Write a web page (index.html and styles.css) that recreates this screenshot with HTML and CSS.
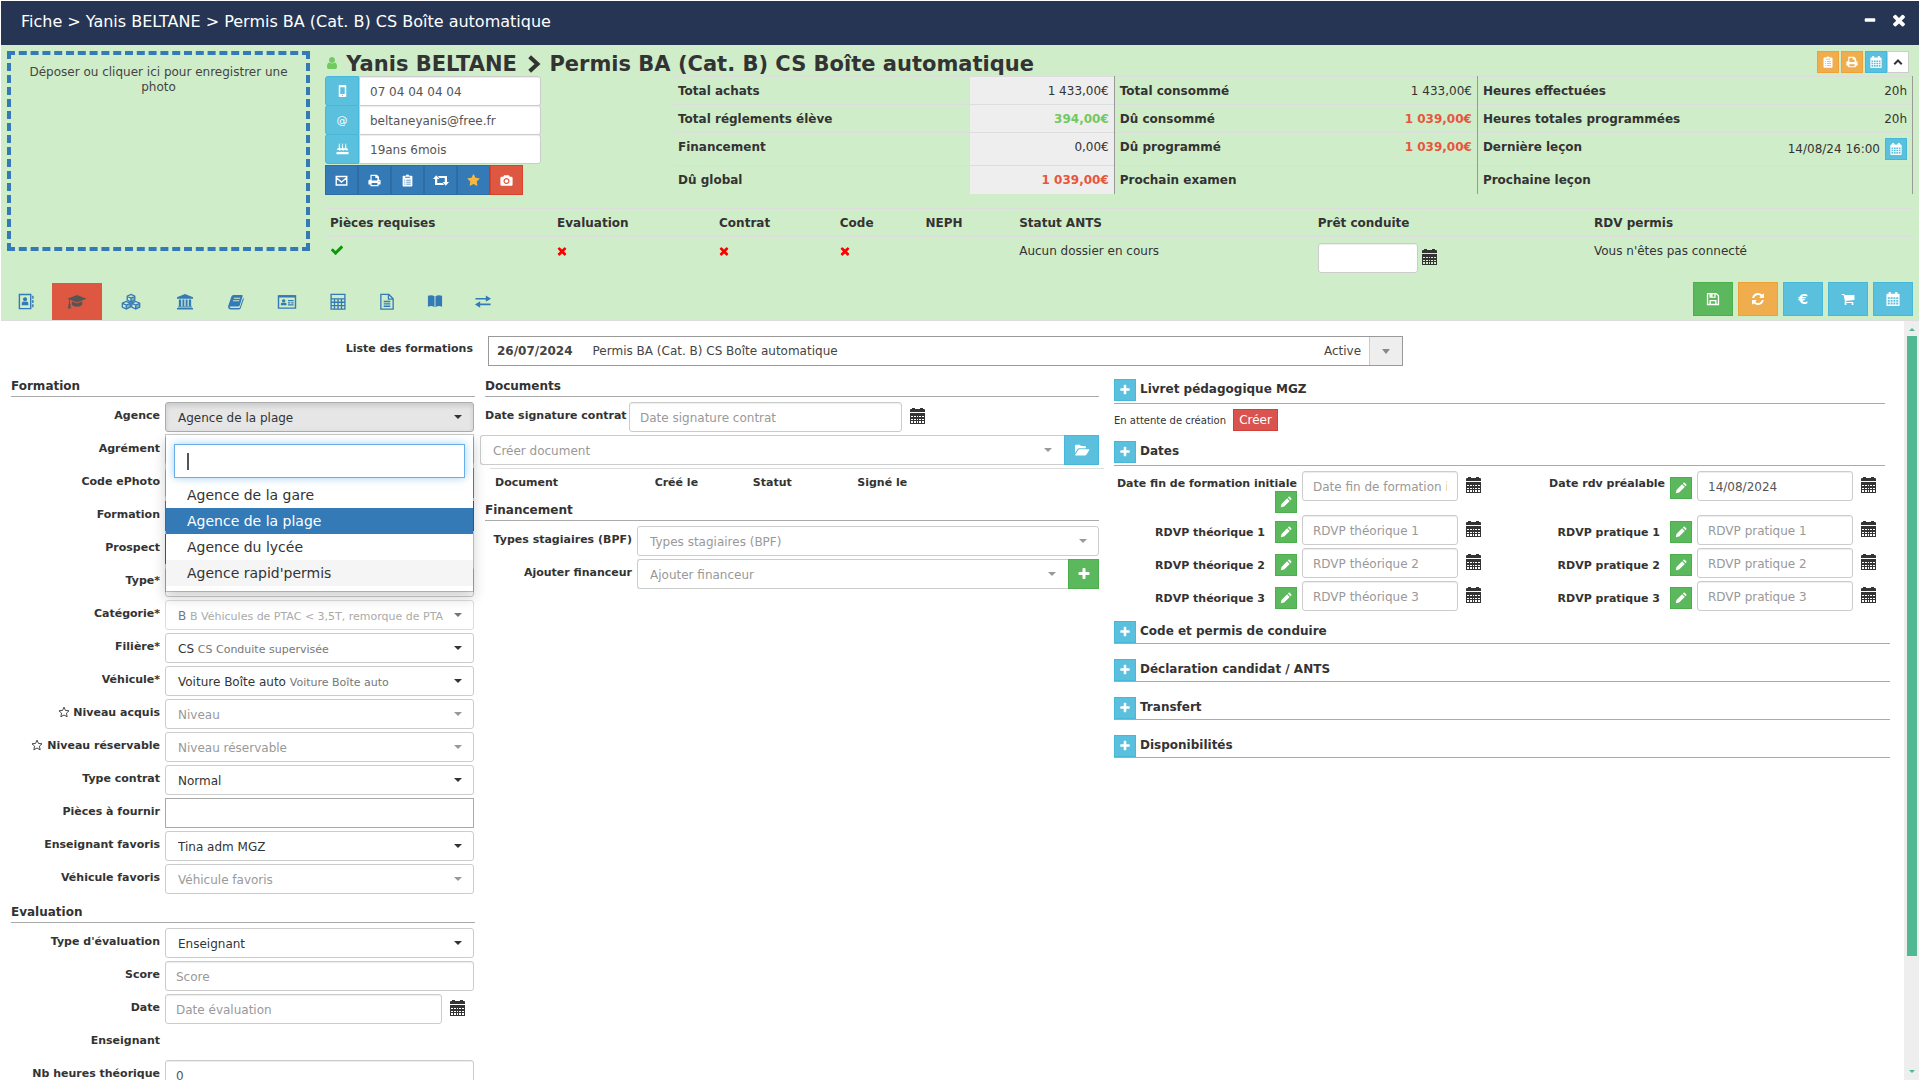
FILE: index.html
```html
<!DOCTYPE html>
<html lang="fr">
<head>
    <meta charset="UTF-8">
    <meta name="viewport" content="width=device-width, initial-scale=1.0">
    <title>Fiche élève</title>
    <link rel="stylesheet" href="styles.css">
</head>
<body>
    <!-- Icons -->
    <svg class="sprite" aria-hidden="true">
        <symbol id="i-user" viewBox="0 0 1792 1792"><path d="M1536 1399q0 109-62.500 187t-150.500 78h-854q-88 0-150.500-78t-62.500-187q0-85 8.500-160.500t31.500-152 58.500-131 94-89 134.500-34.500q131 128 313 128t313-128q76 0 134.500 34.500t94 89 58.500 131 31.500 152 8.500 160.500zm-256-887q0 159-112.500 271.500t-271.500 112.500-271.500-112.500-112.500-271.500 112.500-271.500 271.500-112.500 271.500 112.500 112.500 271.500z"/></symbol>
        <symbol id="i-plus" viewBox="0 0 1792 1792"><path d="M1600 736v192q0 40-28 68t-68 28h-416v416q0 40-28 68t-68 28h-192q-40 0-68-28t-28-68v-416h-416q-40 0-68-28t-28-68v-192q0-40 28-68t68-28h416v-416q0-40 28-68t68-28h192q40 0 68 28t28 68v416h416q40 0 68 28t28 68z"/></symbol>
        <symbol id="i-check" viewBox="0 0 1792 1792"><path d="M1671 566q0 40-28 68l-724 724-136 136q-28 28-68 28t-68-28l-136-136-362-362q-28-28-28-68t28-68l136-136q28-28 68-28t68 28l294 295 656-657q28-28 68-28t68 28l136 136q28 28 28 68z"/></symbol>
        <symbol id="i-times" viewBox="200 200 1392 1392"><path d="M1490 1322q0 40-28 68l-136 136q-28 28-68 28t-68-28l-294-294-294 294q-28 28-68 28t-68-28l-136-136q-28-28-28-68t28-68l294-294-294-294q-28-28-28-68t28-68l136-136q28-28 68-28t68 28l294 294 294-294q28-28 68-28t68 28l136 136q28 28 28 68t-28 68l-294 294 294 294q28 28 28 68z"/></symbol>
        <symbol id="i-star" viewBox="0 0 1792 1792"><path d="M1728 647q0 22-26 48l-363 354 86 500q1 7 1 20 0 21-10.500 35.500t-30.500 14.500q-19 0-40-12l-449-236-449 236q-22 12-40 12-21 0-31.500-14.500t-10.500-35.500q0-6 2-20l86-500-364-354q-25-27-25-48 0-37 56-46l502-73 225-455q19-41 49-41t49 41l225 455 502 73q56 9 56 46z"/></symbol>
        <symbol id="i-refresh" viewBox="0 0 1792 1792"><path d="M1639 1056q0 5-1 7-64 268-268 434.500t-478 166.500q-146 0-282.500-55t-243.500-157l-129 129q-19 19-45 19t-45-19-19-45v-448q0-26 19-45t45-19h448q26 0 45 19t19 45-19 45l-137 137q71 66 161 102t187 36q134 0 250-65t186-179q11-17 53-117 8-23 30-23h192q13 0 22.500 9.500t9.500 22.500zm25-800v448q0 26-19 45t-45 19h-448q-26 0-45-19t-19-45 19-45l138-138q-148-137-349-137-134 0-250 65t-186 179q-11 17-53 117-8 23-30 23h-199q-13 0-22.500-9.500t-9.500-22.500v-7q65-268 270-434.500t480-166.500q146 0 284 55.500t245 156.500l130-129q19-19 45-19t45 19 19 45z"/></symbol>
        <symbol id="i-cart" viewBox="0 0 1792 1792"><path d="M704 1536q0 52-38 90t-90 38-90-38-38-90 38-90 90-38 90 38 38 90zm896 0q0 52-38 90t-90 38-90-38-38-90 38-90 90-38 90 38 38 90zm128-1088v512q0 24-16.500 42.500t-40.500 21.500l-1044 122q13 60 13 70 0 16-24 64h920q26 0 45 19t19 45-19 45-45 19h-1024q-26 0-45-19t-19-45q0-11 8-31.500t16-36 21.500-40 15.500-29.500l-177-823h-204q-26 0-45-19t-19-45 19-45 45-19h256q16 0 28.500 6.500t19.500 15.500 13 24.500 8 26 5.500 29.500 4.500 26h1201q26 0 45 19t19 45z"/></symbol>
        <symbol id="i-star-o" viewBox="0 0 16 16"><path d="M8 1.500l2 4.400 4.700.5-3.500 3.200 1 4.800L8 12l-4.200 2.400 1-4.800L1.300 6.400 6 5.900z" fill="none" stroke="currentColor" stroke-width="1.200"/></symbol>
        <symbol id="i-chevron" viewBox="0 0 16 16"><path d="M5 1.500L12 8l-7 6.500" fill="none" stroke="currentColor" stroke-width="3.600"/></symbol>
        <symbol id="i-up" viewBox="0 0 16 16"><path d="M3 11l5-5 5 5" fill="none" stroke="currentColor" stroke-width="2.600"/></symbol>
        <symbol id="i-minus" viewBox="0 0 16 16"><rect x="2" y="6" width="12" height="4" rx="1"/></symbol>
        <symbol id="i-mobile" viewBox="0 0 16 16"><path fill-rule="evenodd" d="M4 0h8q1 0 1 1v14q0 1-1 1H4q-1 0-1-1V1q0-1 1-1zm1 3v9h6V3zM7.300 13.300v1.200h1.400v-1.200z"/></symbol>
        <symbol id="i-cake" viewBox="0 0 16 16"><path d="M3 3h1.500v4H3zM7.200 3h1.600v4H7.200zM11.500 3H13v4h-1.500zM3 1h1.500v1.300H3zM7.200 1h1.600v1.300H7.200zM11.500 1H13v1.300h-1.500zM2 7h12q1 0 1 1v1.500q-1.200 1-2.300 0t-2.300 0-2.400 0-2.300 0-2.300 0T1 9.500V8q0-1 1-1zM0 15v-3.500q2 1 3.500 0 1.500 1 2.800 0 1.700 1 3.200 0 1.500 1 3 0 1.500 1 3.500 0V15z"/></symbol>
        <symbol id="i-mail" viewBox="0 0 16 16"><path d="M1.500 3h13v10.500h-13zM2 5l6 5 6-5" fill="none" stroke="currentColor" stroke-width="1.700"/></symbol>
        <symbol id="i-print" viewBox="0 0 16 16"><path fill-rule="evenodd" d="M3 1h8l2.500 2.500V7H14q1.500 0 1.500 1.500V13h-2.500v2H3v-2H.5V8.500Q.5 7 2 7h1zm1.500 1.500V8h7V5H9V2.500zm0 8.500v2.500h7V11zM13 8.500v1h1v-1z"/></symbol>
        <symbol id="i-clip" viewBox="0 0 16 16"><path fill-rule="evenodd" d="M3 2h3q0-1.500 2-1.500T10 2h3q1 0 1 1v11.500q0 1-1 1H3q-1 0-1-1V3q0-1 1-1zm2 1.500V4.500h6V3.500zM4 7v1h1.200V7zm2.500 0v1H12V7zM4 9.500v1h1.200v-1zm2.500 0v1H12v-1zM4 12v1h1.200v-1zm2.500 0v1H12v-1z"/></symbol>
        <symbol id="i-retweet" viewBox="0 0 20 16"><path d="M4 1.500l4 4.500H5.300v5H12l2 2.500H3q-.5 0-.5-.5V6H0zM16 14.500l-4-4.500h2.700V5H8L6 2.500h11q.5 0 .5.500v7H20z"/></symbol>
        <symbol id="i-camera" viewBox="0 0 16 16"><path fill-rule="evenodd" d="M5 1.500h6l1 2h2q1.500 0 1.500 1.500v8q0 1.500-1.500 1.500H2Q.5 14.500.5 13V5Q.5 3.500 2 3.500h2zM8 5a3.700 3.700 0 1 0 .01 0zm0 1.500a2.200 2.200 0 1 1-.01 0z"/></symbol>
        <symbol id="i-cal" viewBox="0 0 16 16"><path fill-rule="evenodd" d="M3 0h2.500v2h5V0H13v2h1.500q1 0 1 1v12q0 1-1 1h-13q-1 0-1-1V3q0-1 1-1H3zM2 6v2h2.300V6zm3.300 0v2h2.200V6zm3.200 0v2h2.200V6zm3.200 0v2H14V6zM2 9v2h2.300V9zm3.300 0v2h2.200V9zm3.200 0v2h2.200V9zm3.200 0v2H14V9zM2 12v2.300h2.300V12zm3.300 0v2.300h2.200V12zm3.200 0v2.300h2.200V12zm3.200 0v2.300H14V12z"/></symbol>
        <symbol id="i-date" viewBox="0 0 15 16"><path fill-rule="evenodd" d="M1 1h1V0h3v1h5V0h3v1h1q1 0 1 1v2H0V2q0-1 1-1zM0 5h15v11H0zm1 3v1h2V8zm3 0v1h2V8zm3 0v1h1V8zm2 0v1h2V8zm3 0v1h2V8zM1 11v1h2v-1zm3 0v1h2v-1zm3 0v1h1v-1zm2 0v1h2v-1zm3 0v1h2v-1zM1 13v2h2v-2zm3 0v2h2v-2zm3 0v2h1v-2zm2 0v2h2v-2zm3 0v2h2v-2z"/></symbol>
        <symbol id="i-pencil" viewBox="0 0 16 16"><path d="M1 15l1-4.500L9.500 3 13 6.500 5.500 14zM10.500 2l1-1q.7-.6 1.500 0l2 2q.6.800 0 1.500l-1 1z"/></symbol>
        <symbol id="i-save" viewBox="0 0 16 16"><path fill-rule="evenodd" d="M1 1h11l3 3v11H1zm1.500 1.500v11H4V9h8v4.500h1.500v-9l-2-2H11V6.500H4v-4zM7.500 2.500V5.500h2v-3zM5.500 10.500v3h5v-3z"/></symbol>
        <symbol id="i-folder" viewBox="0 0 18 16"><path d="M1 11.500V3.500Q1 2 2.500 2H6q1.500 0 1.500 1.500h4.500Q13.500 3.500 13.500 5v1H6q-1.500 0-2.400 1.300zM1.300 13.300L4.500 8.300Q5.200 7.200 6.500 7.200h10.200q1.100 0 .5 1l-3 4.800q-.7 1.200-2 1.200H2q-1.100 0-.7-.9z"/></symbol>
        <symbol id="i-book-user" viewBox="0 0 18 18"><path d="M2 1.500h12v15H2z" fill="none" stroke="currentColor" stroke-width="1.500"/><path d="M15.500 3H17v3h-1.500zM15.500 7.500H17v3h-1.500zM15.500 12H17v3h-1.500zM8 4.500a2.200 2.200 0 1 1-.01 0zM4.500 13v-2q0-2 1.700-2 1.800 1 3.600 0 1.700 0 1.700 2v2z"/></symbol>
        <symbol id="i-grad" viewBox="0 0 20 18"><path d="M10 2l10 4-10 4L2.500 7v4q1 .5.500 1.500l.5 4h-3l.5-4q-.5-1 .5-1.500V6.500L0 6zM4.500 8.700L10 11l5.500-2.300v3.800q-1.500 2-5.500 2t-5.500-2z"/></symbol>
        <symbol id="i-cubes" viewBox="0 0 20 18"><path d="M10 1.500l4 1.800v4.200l-4 2-4-2V3.300zM6 3.500l4 1.800 4-1.800M10 5.300v4M5 9l4.200 1.800v4L5 17l-4.200-2v-4.200zM1 11l4 1.700L9.200 11M5 12.700V17M15 9l4.200 1.800v4L15 17l-4.200-2v-4.200zM11 11l4 1.700 4.200-1.700M15 12.700V17" fill="none" stroke="currentColor" stroke-width="1.400"/><path d="M10 5.300l4-1.800v4l-4 2zM5 12.700L9.200 11v4L5 17zM15 12.700l4.200-1.700v4L15 17z" opacity=".5"/></symbol>
        <symbol id="i-bank" viewBox="0 0 18 18"><path d="M9 1l8.500 3.500V6h-17V4.500zM2.500 7H5v7H2.500zM6.300 7h2v7h-2zM9.700 7h2v7h-2zM13 7h2.500v7H13zM1.500 14.300h15v1H1.500zM.5 15.800h17V17.500H.5z"/></symbol>
        <symbol id="i-book" viewBox="0 0 18 18"><path fill-rule="evenodd" d="M6.500 2H15q1.500 0 1 1.500l-3 9.500q-.5 1.300-2 1.300H3q-1 0-.7.800T4 16h8q.8 0 1.200-.8l3.300-10q1 .4.600 1.800l-3 9q-.5 1.400-2 1.400H3.500Q1 17.400.600 15q-.1-1 .4-2L4 4q.7-2 2.500-2zM7 5l-.4 1h6.600l.3-1zM6 7.700l-.3 1h6.600l.3-1z"/></symbol>
        <symbol id="i-card" viewBox="0 0 20 18"><path d="M1 3h18v13H1z" fill="none" stroke="currentColor" stroke-width="1.500"/><path d="M1 2.500h18v2.300H1zM6.500 6.500a1.800 1.800 0 1 1-.01 0zM3.500 13v-1.300q0-1.500 1.400-1.500 1.600.7 3.200 0 1.400 0 1.400 1.500V13zM11 7.500h6v1.200h-6zM11 9.700h2.500V11H11zM14.500 9.700H17V11h-2.500zM11 12h6v1.200h-6z"/></symbol>
        <symbol id="i-calc" viewBox="0 0 18 18"><path d="M1.700 1.500h14.600v15.500H1.700zM2 6.200h14M2 9.800h14M2 13.400h14M5.300 6v11M9 6v11M12.700 6v11" fill="none" stroke="currentColor" stroke-width="1.400"/></symbol>
        <symbol id="i-file" viewBox="0 0 18 18"><path d="M2.500 1.500h8.500l4.500 4.500v11h-13zM10.500 1.500v5h5M5.500 9h7M5.500 11.500h7M5.500 14h7" fill="none" stroke="currentColor" stroke-width="1.400"/></symbol>
        <symbol id="i-open-book" viewBox="0 0 18 18"><path d="M1.500 3q4-1.500 7 .500v11.500q-3-2-7-.5zM16.500 3q-4-1.500-7 .500v11.500q3-2 7-.5z"/></symbol>
        <symbol id="i-swap" viewBox="0 0 18 18"><path d="M1 5.200h11V2.700L17.500 6 12 9.300V7H1zM17 11H6V8.800L.5 12.200 6 15.500V13h11z"/></symbol>
    </svg>

    <header class="title-bar">
        <h1>Fiche &gt; Yanis BELTANE &gt; Permis BA (Cat. B) CS Boîte automatique</h1>
        <div class="window-buttons">
            <button type="button" aria-label="Réduire"><svg class="icon"><use href="#i-minus"/></svg></button>
            <button type="button" aria-label="Fermer"><svg class="icon"><use href="#i-times"/></svg></button>
        </div>
    </header>

    <section class="summary">
        <div class="summary-top">
            <button type="button" class="photo-drop">Déposer ou cliquer ici pour enregistrer une photo</button>
            <div class="student">
                <div class="student-head">
                    <h2><svg class="icon user-icon"><use href="#i-user"/></svg> Yanis BELTANE <svg class="icon chevron"><use href="#i-chevron"/></svg> Permis BA (Cat. B) CS Boîte automatique</h2>
                    <div class="head-tools">
                        <button type="button" class="btn btn-xs btn-warning" aria-label="Notes"><svg class="icon"><use href="#i-clip"/></svg></button>
                        <button type="button" class="btn btn-xs btn-warning" aria-label="Imprimer"><svg class="icon"><use href="#i-print"/></svg></button>
                        <div class="btn-pair">
                            <button type="button" class="btn btn-xs btn-info" aria-label="Planning"><svg class="icon"><use href="#i-cal"/></svg></button>
                            <button type="button" class="btn btn-xs btn-default" aria-label="Replier"><svg class="icon"><use href="#i-up"/></svg></button>
                        </div>
                    </div>
                </div>

                <div class="student-row">
                    <div class="contact">
                        <div class="input-group">
                            <label class="addon" for="phone" aria-label="Téléphone"><svg class="icon"><use href="#i-mobile"/></svg></label>
                            <input type="text" id="phone" class="form-control" value="07 04 04 04 04">
                        </div>
                        <div class="input-group">
                            <label class="addon" for="email" aria-label="Email">@</label>
                            <input type="text" id="email" class="form-control" value="beltaneyanis@free.fr">
                        </div>
                        <div class="input-group">
                            <label class="addon" for="age" aria-label="Age"><svg class="icon"><use href="#i-cake"/></svg></label>
                            <input type="text" id="age" class="form-control" value="19ans 6mois">
                        </div>
                        <div class="btn-bar">
                            <button type="button" class="btn btn-primary" aria-label="Email"><svg class="icon"><use href="#i-mail"/></svg></button>
                            <button type="button" class="btn btn-primary" aria-label="Imprimer"><svg class="icon"><use href="#i-print"/></svg></button>
                            <button type="button" class="btn btn-primary" aria-label="Notes"><svg class="icon"><use href="#i-clip"/></svg></button>
                            <button type="button" class="btn btn-primary" aria-label="Transférer"><svg class="icon retweet"><use href="#i-retweet"/></svg></button>
                            <button type="button" class="btn btn-primary btn-star" aria-label="Favori"><svg class="icon"><use href="#i-star"/></svg></button>
                            <button type="button" class="btn btn-photo" aria-label="Photo"><svg class="icon"><use href="#i-camera"/></svg></button>
                        </div>
                    </div>

                    <table class="totals">
                        <tr>
                            <th class="c-label">Total achats</th><td class="c-amount grey">1 433,00€</td>
                            <th class="c-label-2">Total consommé</th><td class="c-amount-2">1 433,00€</td>
                            <th class="c-label-3">Heures effectuées</th><td>20h</td>
                        </tr>
                        <tr>
                            <th>Total réglements élève</th><td class="grey green">394,00€</td>
                            <th>Dû consommé</th><td class="red">1 039,00€</td>
                            <th>Heures totales programmées</th><td>20h</td>
                        </tr>
                        <tr>
                            <th>Financement</th><td class="grey">0,00€</td>
                            <th>Dû programmé</th><td class="red">1 039,00€</td>
                            <th>Dernière leçon</th>
                            <td class="lesson-cell"><div class="lesson">14/08/24 16:00 <button type="button" class="btn btn-xs btn-info" aria-label="Planning"><svg class="icon"><use href="#i-cal"/></svg></button></div></td>
                        </tr>
                        <tr>
                            <th>Dû global</th><td class="grey red">1 039,00€</td>
                            <th>Prochain examen</th><td></td>
                            <th>Prochaine leçon</th><td></td>
                        </tr>
                    </table>
                </div>

                <table class="status">
                    <thead>
                        <tr>
                            <th class="s-1">Pièces requises</th>
                            <th class="s-2">Evaluation</th>
                            <th class="s-3">Contrat</th>
                            <th class="s-4">Code</th>
                            <th class="s-5">NEPH</th>
                            <th class="s-6">Statut ANTS</th>
                            <th class="s-7">Prêt conduite</th>
                            <th>RDV permis</th>
                        </tr>
                    </thead>
                    <tbody>
                        <tr>
                            <td><svg class="icon ok"><use href="#i-check"/></svg></td>
                            <td><svg class="icon ko"><use href="#i-times"/></svg></td>
                            <td><svg class="icon ko"><use href="#i-times"/></svg></td>
                            <td><svg class="icon ko"><use href="#i-times"/></svg></td>
                            <td></td>
                            <td>Aucun dossier en cours</td>
                            <td><div class="pret"><input type="text" class="form-control" aria-label="Prêt conduite"><svg class="date-icon"><use href="#i-date"/></svg></div></td>
                            <td>Vous n'êtes pas connecté</td>
                        </tr>
                    </tbody>
                </table>
            </div>
        </div>

        <div class="tab-row">
            <nav class="tabs">
                <a href="#" aria-label="Contact"><svg><use href="#i-book-user"/></svg></a>
                <a href="#" class="active" aria-label="Formation"><svg><use href="#i-grad"/></svg></a>
                <a href="#" class="wide" aria-label="Produits"><svg><use href="#i-cubes"/></svg></a>
                <a href="#" aria-label="Banque"><svg><use href="#i-bank"/></svg></a>
                <a href="#" aria-label="Livret"><svg><use href="#i-book"/></svg></a>
                <a href="#" aria-label="Identité"><svg><use href="#i-card"/></svg></a>
                <a href="#" aria-label="Comptes"><svg><use href="#i-calc"/></svg></a>
                <a href="#" class="narrow" aria-label="Documents"><svg><use href="#i-file"/></svg></a>
                <a href="#" class="narrow" aria-label="Cours"><svg><use href="#i-open-book"/></svg></a>
                <a href="#" class="narrow" aria-label="Echanges"><svg><use href="#i-swap"/></svg></a>
            </nav>
            <div class="actions">
                <button type="button" class="btn btn-success" aria-label="Enregistrer"><svg class="icon"><use href="#i-save"/></svg></button>
                <button type="button" class="btn btn-warning" aria-label="Actualiser"><svg class="icon"><use href="#i-refresh"/></svg></button>
                <button type="button" class="btn btn-info">€</button>
                <button type="button" class="btn btn-info" aria-label="Panier"><svg class="icon"><use href="#i-cart"/></svg></button>
                <button type="button" class="btn btn-info" aria-label="Planning"><svg class="icon"><use href="#i-cal"/></svg></button>
            </div>
        </div>
    </section>

    <main class="content">
        <div class="content-body">
            <div class="training-list">
                <span class="training-label" id="lbl-list">Liste des formations</span>
                <button type="button" class="training-select" aria-haspopup="listbox" aria-labelledby="lbl-list">
                    <b>26/07/2024</b>
                    <span class="training-name">Permis BA (Cat. B) CS Boîte automatique</span>
                    <span>Active</span>
                    <span class="training-arrow"></span>
                </button>
            </div>

            <div class="columns">
                <div class="column col-left">
                    <h3>Formation</h3>
                    <div class="form-row">
                        <label for="agence">Agence</label>
                        <div class="picker open">
                            <button type="button" id="agence" class="picker-button" aria-haspopup="listbox">Agence de la plage</button>
                            <div class="menu">
                                <input type="text" class="menu-search" aria-label="Rechercher">
                                <span class="caret-line"></span>
                                <ul>
                                    <li>Agence de la gare</li>
                                    <li class="selected">Agence de la plage</li>
                                    <li>Agence du lycée</li>
                                    <li class="hover">Agence rapid'permis</li>
                                </ul>
                            </div>
                        </div>
                    </div>
                    <div class="form-row"><label for="agrement">Agrément</label><div class="picker"><select id="agrement"><option></option></select></div></div>
                    <div class="form-row"><label for="ephoto">Code ePhoto</label><input type="text" id="ephoto" class="form-control"><button type="button" class="btn btn-info side" aria-label="ePhoto"></button></div>
                    <div class="form-row"><label for="state-ok">Formation</label><button type="button" id="state-ok" class="btn btn-success half"></button><button type="button" class="btn btn-danger half" aria-label="Fin"></button></div>
                    <div class="form-row"><label for="prospect">Prospect</label><button type="button" id="prospect" class="btn btn-danger side"></button></div>
                    <div class="form-row"><label for="type">Type*</label><div class="picker"><select id="type"><option></option></select></div></div>
                    <div class="form-row">
                        <label for="categorie">Catégorie*</label>
                        <div class="picker disabled"><button type="button" id="categorie" class="picker-button" aria-haspopup="listbox">B <small>B Véhicules de PTAC &lt; 3,5T, remorque de PTA</small></button></div>
                    </div>
                    <div class="form-row">
                        <label for="filiere">Filière*</label>
                        <div class="picker"><button type="button" id="filiere" class="picker-button" aria-haspopup="listbox">CS <small>CS Conduite supervisée</small></button></div>
                    </div>
                    <div class="form-row">
                        <label for="vehicule">Véhicule*</label>
                        <div class="picker"><button type="button" id="vehicule" class="picker-button" aria-haspopup="listbox">Voiture Boîte auto <small>Voiture Boîte auto</small></button></div>
                    </div>
                    <div class="form-row"><label for="niveau"><svg class="star"><use href="#i-star-o"/></svg> Niveau acquis</label><div class="picker empty"><select id="niveau"><option>Niveau</option></select></div></div>
                    <div class="form-row"><label for="niveau-r"><svg class="star"><use href="#i-star-o"/></svg> Niveau réservable</label><div class="picker empty"><select id="niveau-r"><option>Niveau réservable</option></select></div></div>
                    <div class="form-row"><label for="contrat">Type contrat</label><div class="picker"><select id="contrat"><option>Normal</option></select></div></div>
                    <div class="form-row"><label for="pieces">Pièces à fournir</label><input type="text" id="pieces" class="form-control square"></div>
                    <div class="form-row"><label for="enseignant">Enseignant favoris</label><div class="picker"><select id="enseignant"><option>Tina adm MGZ</option></select></div></div>
                    <div class="form-row"><label for="vehicule-f">Véhicule favoris</label><div class="picker empty"><select id="vehicule-f"><option>Véhicule favoris</option></select></div></div>

                    <h3>Evaluation</h3>
                    <div class="form-row"><label for="type-eval">Type d'évaluation</label><div class="picker"><select id="type-eval"><option>Enseignant</option></select></div></div>
                    <div class="form-row"><label for="score">Score</label><input type="text" id="score" class="form-control" placeholder="Score"></div>
                    <div class="form-row"><label for="date-eval">Date</label><input type="text" id="date-eval" class="form-control" placeholder="Date évaluation"><svg class="date-icon date-eval"><use href="#i-date"/></svg></div>
                    <div class="form-row"><span class="row-label">Enseignant</span></div>
                    <div class="form-row"><label for="heures">Nb heures théorique</label><input type="text" id="heures" class="form-control" value="0"></div>
                </div>

                <div class="column col-middle">
                    <h3>Documents</h3>
                    <div class="form-row sign-row"><label for="signature">Date signature contrat</label><input type="text" id="signature" class="form-control" placeholder="Date signature contrat"><svg class="date-icon"><use href="#i-date"/></svg></div>
                    <div class="form-row doc-row"><div class="picker empty"><select aria-label="Créer document"><option>Créer document</option></select></div><button type="button" class="btn btn-info side" aria-label="Ouvrir"><svg class="icon folder"><use href="#i-folder"/></svg></button></div>
                    <table class="documents">
                        <tr><th class="d-1">Document</th><th class="d-2">Créé le</th><th class="d-3">Statut</th><th>Signé le</th></tr>
                    </table>
                    <h3>Financement</h3>
                    <div class="form-row"><label for="bpf">Types stagiaires (BPF)</label><div class="picker empty"><select id="bpf"><option>Types stagiaires (BPF)</option></select></div></div>
                    <div class="form-row"><label for="financeur">Ajouter financeur</label><div class="picker empty joined"><select id="financeur"><option>Ajouter financeur</option></select></div><button type="button" class="btn btn-success add" aria-label="Ajouter"><svg class="icon"><use href="#i-plus"/></svg></button></div>
                </div>

                <div class="column col-right">
                    <div class="bar bar-open"><button type="button" class="btn btn-xs btn-info" aria-label="Ajouter"><svg class="icon"><use href="#i-plus"/></svg></button><h4>Livret pédagogique MGZ</h4></div>
                    <div class="booklet">En attente de création <button type="button" class="btn btn-danger create">Créer</button></div>
                    <div class="bar bar-open"><button type="button" class="btn btn-xs btn-info" aria-label="Ajouter"><svg class="icon"><use href="#i-plus"/></svg></button><h4>Dates</h4></div>
                    <div class="dates">
                        <div class="date-field first">
                            <div class="date-label"><label for="d1">Date fin de formation initiale</label><button type="button" class="btn btn-xs btn-success" aria-label="Modifier"><svg class="icon"><use href="#i-pencil"/></svg></button></div>
                            <input type="text" id="d1" class="form-control" placeholder="Date fin de formation initiale"><svg class="date-icon"><use href="#i-date"/></svg>
                        </div>
                        <div class="date-field first">
                            <div class="date-label"><label for="d2">Date rdv préalable</label><button type="button" class="btn btn-xs btn-success" aria-label="Modifier"><svg class="icon"><use href="#i-pencil"/></svg></button></div>
                            <input type="text" id="d2" class="form-control" value="14/08/2024"><svg class="date-icon"><use href="#i-date"/></svg>
                        </div>
                        <div class="date-field">
                            <div class="date-label"><label for="t1">RDVP théorique 1</label><button type="button" class="btn btn-xs btn-success" aria-label="Modifier"><svg class="icon"><use href="#i-pencil"/></svg></button></div>
                            <input type="text" id="t1" class="form-control" placeholder="RDVP théorique 1"><svg class="date-icon"><use href="#i-date"/></svg>
                        </div>
                        <div class="date-field">
                            <div class="date-label"><label for="p1">RDVP pratique 1</label><button type="button" class="btn btn-xs btn-success" aria-label="Modifier"><svg class="icon"><use href="#i-pencil"/></svg></button></div>
                            <input type="text" id="p1" class="form-control" placeholder="RDVP pratique 1"><svg class="date-icon"><use href="#i-date"/></svg>
                        </div>
                        <div class="date-field">
                            <div class="date-label"><label for="t2">RDVP théorique 2</label><button type="button" class="btn btn-xs btn-success" aria-label="Modifier"><svg class="icon"><use href="#i-pencil"/></svg></button></div>
                            <input type="text" id="t2" class="form-control" placeholder="RDVP théorique 2"><svg class="date-icon"><use href="#i-date"/></svg>
                        </div>
                        <div class="date-field">
                            <div class="date-label"><label for="p2">RDVP pratique 2</label><button type="button" class="btn btn-xs btn-success" aria-label="Modifier"><svg class="icon"><use href="#i-pencil"/></svg></button></div>
                            <input type="text" id="p2" class="form-control" placeholder="RDVP pratique 2"><svg class="date-icon"><use href="#i-date"/></svg>
                        </div>
                        <div class="date-field">
                            <div class="date-label"><label for="t3">RDVP théorique 3</label><button type="button" class="btn btn-xs btn-success" aria-label="Modifier"><svg class="icon"><use href="#i-pencil"/></svg></button></div>
                            <input type="text" id="t3" class="form-control" placeholder="RDVP théorique 3"><svg class="date-icon"><use href="#i-date"/></svg>
                        </div>
                        <div class="date-field">
                            <div class="date-label"><label for="p3">RDVP pratique 3</label><button type="button" class="btn btn-xs btn-success" aria-label="Modifier"><svg class="icon"><use href="#i-pencil"/></svg></button></div>
                            <input type="text" id="p3" class="form-control" placeholder="RDVP pratique 3"><svg class="date-icon"><use href="#i-date"/></svg>
                        </div>
                    </div>
                    <div class="bar"><button type="button" class="btn btn-xs btn-info" aria-label="Ajouter"><svg class="icon"><use href="#i-plus"/></svg></button><h4>Code et permis de conduire</h4></div>
                    <div class="bar"><button type="button" class="btn btn-xs btn-info" aria-label="Ajouter"><svg class="icon"><use href="#i-plus"/></svg></button><h4>Déclaration candidat / ANTS</h4></div>
                    <div class="bar"><button type="button" class="btn btn-xs btn-info" aria-label="Ajouter"><svg class="icon"><use href="#i-plus"/></svg></button><h4>Transfert</h4></div>
                    <div class="bar"><button type="button" class="btn btn-xs btn-info" aria-label="Ajouter"><svg class="icon"><use href="#i-plus"/></svg></button><h4>Disponibilités</h4></div>
                </div>
            </div>
        </div>
        <div class="scrollbar">
            <span class="arrow-up"></span>
            <div class="track"><div class="thumb"></div></div>
            <span class="arrow-down"></span>
        </div>
    </main>
</body>
</html>
```
FILE: styles.css
```css
* {
    box-sizing: border-box;
}
body {
    font-family: "DejaVu Sans", Verdana, sans-serif;
    font-size: 12px;
    line-height: 17px;
    color: #333;
    margin: 0;
    padding: 1px 1px 0;
    height: 100vh;
    display: flex;
    flex-direction: column;
    overflow: hidden;
    background: #fff;
}
button, input, select {
    font-family: inherit;
    font-size: 12px;
    color: inherit;
    margin: 0;
}
h1, h2, h3, h4 {
    margin: 0;
}
.sprite {
    position: absolute;
    width: 0;
    height: 0;
}
.icon {
    width: 14px;
    height: 14px;
    fill: currentColor;
    flex: none;
}
.date-icon {
    width: 15px;
    height: 16px;
    fill: #333;
    flex: none;
    margin: 6px 0 0 8px;
}

/* Title bar */
.title-bar {
    height: 44px;
    flex: none;
    display: flex;
    align-items: center;
    justify-content: space-between;
    padding: 0 12px 4px 20px;
    background: #263553;
    color: #fff;
}
.title-bar h1 {
    font-size: 16px;
    font-weight: normal;
}
.window-buttons {
    display: flex;
    gap: 13px;
}
.window-buttons button {
    border: none;
    background: none;
    color: #fff;
    padding: 0;
    width: 16px;
    height: 16px;
}

/* Buttons */
.btn {
    display: flex;
    align-items: center;
    justify-content: center;
    padding: 0;
    border: 1px solid #ccc;
    flex: none;
    color: #fff;
    cursor: pointer;
}
.btn-xs {
    width: 22px;
    height: 22px;
}
.btn-xs .icon {
    width: 12px;
    height: 12px;
}
.btn-info {
    background: #5bc0de;
    border-color: #46b8da;
}
.btn-warning {
    background: #f0ad4e;
    border-color: #eea236;
}
.btn-success {
    background: #5cb85c;
    border-color: #4cae4c;
}
.btn-danger {
    background: #d9534f;
    border-color: #d43f3a;
}
.btn-primary {
    background: #337ab7;
    border-color: #2e6da4;
}
.btn-default {
    background: #fff;
    color: #333;
}
.form-control {
    height: 30px;
    flex: 1;
    min-width: 0;
    border: 1px solid #ccc;
    border-radius: 3px;
    padding: 2px 10px 0;
    color: #555;
    background: #fff;
    box-shadow: inset 0 1px 1px rgba(0, 0, 0, .075);
}
.form-control::placeholder {
    color: #999;
}

/* Summary */
.summary {
    flex: none;
    background: #d0edca;
    border-bottom: 1px solid #ddd;
}
.summary-top {
    display: flex;
    align-items: flex-start;
    padding: 6px 6px 0;
    gap: 15px;
}
.photo-drop {
    width: 303px;
    height: 200px;
    flex: none;
    display: block;
    border: 4px dashed #337ab7;
    background: none;
    padding: 0 16px 142px;
    line-height: 15px;
    color: #444;
}
.student {
    flex: 1;
    min-width: 0;
}
.student-head {
    height: 25px;
    display: flex;
    justify-content: space-between;
    align-items: flex-start;
    padding-right: 4px;
}
.student-head h2 {
    font-size: 21px;
    line-height: 27px;
    white-space: nowrap;
}
.student-head .user-icon {
    width: 14px;
    height: 16px;
    color: #6fca5f;
}
.student-head .chevron {
    width: 18px;
    height: 18px;
    margin-bottom: -2px;
}
.head-tools {
    display: flex;
    gap: 2px;
}
.btn-pair {
    display: flex;
}
.student-row {
    display: flex;
}
.contact {
    width: 348px;
    flex: none;
}
.input-group {
    display: flex;
    width: 216px;
    margin-bottom: -1px;
}
.input-group .form-control {
    border-radius: 0 3px 3px 0;
}
.addon {
    width: 34px;
    display: flex;
    align-items: center;
    justify-content: center;
    background: #5bc0de;
    border: 1px solid #46b8da;
    border-radius: 3px 0 0 3px;
    color: #fff;
    font-size: 11px;
}
.addon .icon {
    width: 13px;
    height: 12px;
}
.btn-bar {
    display: flex;
    width: 198px;
    margin-top: 2px;
}
.btn-bar .btn {
    height: 30px;
    flex: 1;
}
.btn-bar .icon {
    width: 13px;
    height: 13px;
}
.btn-bar .retweet {
    width: 16px;
}
.btn-bar .btn-star {
    color: #f8b73e;
}
.btn-photo {
    background: #de5741;
    border-color: #d9432b;
}

.totals, .status, .documents {
    width: 100%;
    border-collapse: collapse;
    table-layout: fixed;
}
.totals {
    align-self: flex-start;
    flex: 1;
    min-width: 0;
}
.totals th, .totals td, .status th, .status td {
    border-top: 1px solid #ddd;
    padding: 6px 5px 4px;
    height: 28px;
    text-align: left;
    vertical-align: top;
    white-space: nowrap;
}
.totals td {
    text-align: right;
    border-right: 1px solid #999;
}
.totals td.lesson-cell {
    padding: 5px;
}
.totals td.grey {
    background: #eee;
}
.totals td.green {
    color: #6fca5f;
    font-weight: bold;
}
.totals td.red {
    color: #e8553f;
    font-weight: bold;
}
.c-label {
    width: 24%;
}
.c-amount {
    width: 11.6%;
}
.c-label-2 {
    width: 16%;
}
.c-amount-2 {
    width: 13.3%;
}
.c-label-3 {
    width: 18%;
}
.lesson {
    display: flex;
    justify-content: flex-end;
    align-items: center;
    gap: 5px;
}
.status {
    margin-top: 13px;
}
.s-1 {
    width: 14.3%;
}
.s-2 {
    width: 10.2%;
}
.s-3 {
    width: 7.6%;
}
.s-4 {
    width: 5.4%;
}
.s-5 {
    width: 5.9%;
}
.s-6 {
    width: 18.8%;
}
.s-7 {
    width: 17.4%;
}
.ok {
    color: #0a9a0a;
}
.status .ko {
    color: #f00;
    width: 10px;
    height: 10px;
    margin-top: 3px;
}
.pret {
    display: flex;
}
.pret .form-control {
    flex: none;
    width: 100px;
}
.pret .date-icon {
    margin-left: 4px;
}

/* Tabs */
.tab-row {
    display: flex;
    justify-content: space-between;
    align-items: flex-start;
    padding: 5px 6px 0 0;
}
.tabs {
    display: flex;
    gap: 2px;
    padding-top: 1px;
}
.tabs a {
    width: 49px;
    height: 37px;
    display: flex;
    align-items: center;
    justify-content: center;
    color: #337ab7;
}
.tabs svg {
    width: 20px;
    height: 17px;
    fill: currentColor;
}
.tabs .active {
    width: 50px;
    background: #de5741;
    color: #555;
}
.tabs .wide {
    width: 54px;
}
.tabs .narrow {
    width: 46px;
}
.actions {
    display: flex;
    gap: 5px;
}
.actions .btn {
    width: 40px;
    height: 34px;
    font-size: 14px;
    font-weight: bold;
}

/* Content */
.content {
    flex: 1;
    min-height: 0;
    display: flex;
}
.content-body {
    flex: 1;
    overflow: hidden;
    padding: 15px 14px 0 10px;
}
.training-list {
    display: flex;
    gap: 15px;
}
.training-label {
    width: 462px;
    text-align: right;
    font-size: 11px;
    font-weight: bold;
    padding-top: 4px;
}
.training-select {
    width: 48.7%;
    height: 30px;
    display: flex;
    align-items: center;
    border: 1px solid #999;
    background: #fff;
    padding: 0 0 0 8px;
    text-align: left;
    color: #444;
}
.training-name {
    flex: 1;
    margin-left: 20px;
}
.training-arrow {
    width: 33px;
    height: 28px;
    margin-left: 8px;
    border-left: 1px solid #ccc;
    background: #eee;
    display: flex;
    align-items: center;
    justify-content: center;
}
.training-arrow::after {
    content: "";
    border: 4px solid transparent;
    border-top: 5px solid #888;
    border-bottom: 0;
}
.columns {
    display: grid;
    grid-template-columns: 464fr 614fr 781fr;
    gap: 10px;
    margin-top: 10px;
}
.column {
    min-width: 0;
}
h3 {
    font-size: 12px;
    line-height: 20px;
    border-bottom: 1px solid #aaa;
    margin-bottom: 5px;
}
.form-row ~ h3 {
    margin-top: 8px;
}
.form-row {
    display: flex;
    min-height: 30px;
    margin-bottom: 3px;
    padding-right: 1px;
}
.form-row > label, .row-label {
    width: 149px;
    margin-right: 5px;
    padding-top: 5px;
    flex: none;
    text-align: right;
    font-size: 11px;
    font-weight: bold;
    white-space: nowrap;
}
.star {
    width: 12px;
    height: 12px;
    vertical-align: -2px;
}
.picker {
    position: relative;
    flex: 1;
    min-width: 0;
}
.picker select, .picker-button {
    appearance: none;
    width: 100%;
    height: 30px;
    border: 1px solid #ccc;
    border-radius: 3px;
    background: #fff;
    padding: 2px 20px 0 12px;
    text-align: left;
    color: #333;
    overflow: hidden;
    white-space: nowrap;
}
.picker small {
    font-size: 11px;
    color: #777;
}
.picker::after {
    content: "";
    position: absolute;
    right: 12px;
    top: 13px;
    border: 4px solid transparent;
    border-top-color: #333;
    border-bottom: 0;
}
.picker.empty select {
    color: #999;
}
.picker.empty::after {
    border-top-color: #999;
}
.picker.disabled .picker-button {
    color: #777;
    border-color: #ddd;
}
.picker.disabled small {
    color: #aaa;
}
.picker.disabled::after {
    border-top-color: #777;
}
.open .picker-button {
    background: #e6e6e6;
    border-color: #adadad;
    box-shadow: inset 0 3px 5px rgba(0, 0, 0, .125);
}
.square {
    border-color: #aaa;
    border-radius: 0;
    box-shadow: none;
}
.side {
    width: 35px;
    height: 30px;
}
.half {
    flex: 1;
    height: 30px;
}
.date-eval {
    margin-right: 9px;
}

/* Agency drop-down */
.menu {
    position: absolute;
    top: 32px;
    left: 0;
    right: 0;
    z-index: 10;
    padding: 9px 0 5px;
    border: 1px solid rgba(0, 0, 0, .2);
    background: #fff;
    background-clip: padding-box;
    box-shadow: 0 6px 12px rgba(0, 0, 0, .175);
}
.menu-search {
    display: block;
    width: calc(100% - 16px);
    height: 34px;
    margin: 0 8px 4px;
    padding: 6px 12px;
    border: 1px solid #66afe9;
    box-shadow: 0 0 8px rgba(102, 175, 233, .6);
    outline: none;
}
.caret-line {
    position: absolute;
    left: 21px;
    top: 18px;
    width: 2px;
    height: 17px;
    background: #555;
}
.menu ul {
    list-style: none;
    margin: 0;
    padding: 0;
}
.menu li {
    font-size: 14px;
    line-height: 26px;
    padding-left: 21px;
}
.menu .selected {
    background: #337ab7;
    color: #fff;
}
.menu .hover {
    background: #f5f5f5;
}

/* Documents column */
.col-middle .form-row {
    padding-right: 0;
}
.col-middle .form-row > label {
    width: 147px;
}
.col-middle .sign-row > label {
    width: 139px;
}
.sign-row .form-control {
    flex: none;
    width: 273px;
}
.col-middle .doc-row {
    margin-left: -5px;
}
.doc-row select, .joined select {
    border-radius: 3px 0 0 3px;
    border-right: 0;
}
.add {
    width: 31px;
    height: 30px;
}
.folder {
    width: 16px;
    height: 14px;
}
.documents {
    margin-left: 5px;
}
.documents th {
    border-top: 1px solid #ddd;
    padding: 5px 5px 9px;
    text-align: left;
    font-size: 11px;
}
.form-row ~ .documents + h3 {
    margin-top: 0;
}
.d-1 {
    width: 26%;
}
.d-2 {
    width: 16%;
}
.d-3 {
    width: 17%;
}

/* Right column */
.col-right {
    padding: 3px 0 0 5px;
}
.bar {
    display: flex;
    gap: 4px;
    border-bottom: 1px solid #aaa;
    margin-top: 15px;
}
.bar h4 {
    font-size: 12px;
    line-height: 20px;
}
.bar-open {
    padding-bottom: 2px;
    margin: 0 5px 5px 0;
}
.booklet {
    display: flex;
    align-items: center;
    gap: 7px;
    font-size: 10px;
    margin-bottom: 10px;
}
.create {
    width: 45px;
    height: 22px;
}
.dates {
    display: grid;
    grid-template-columns: 395fr 381fr;
    row-gap: 3px;
    margin-bottom: 10px;
}
.dates + .bar {
    margin-top: 0;
}
.date-field {
    display: flex;
    align-items: flex-start;
}
.date-field.first {
    height: 41px;
}
.date-field .form-control {
    flex: none;
    width: 156px;
}
.date-label {
    width: 183px;
    margin-right: 5px;
    padding-top: 6px;
    display: flex;
    flex-wrap: wrap;
    justify-content: flex-end;
    align-items: center;
    column-gap: 10px;
    font-size: 11px;
    font-weight: bold;
}
.first .date-label {
    align-items: flex-start;
    column-gap: 5px;
    line-height: 14px;
}

/* Scrollbar */
.scrollbar {
    width: 15px;
    flex: none;
    background: #eee;
    display: flex;
    flex-direction: column;
    align-items: center;
    padding: 7px 0;
    gap: 5px;
}
.track {
    flex: 1;
    width: 10px;
}
.thumb {
    height: 85%;
    background: #50b893;
}
.arrow-up, .arrow-down {
    border: 3px solid transparent;
}
.arrow-up {
    border-top: 0;
    border-bottom-color: #50b893;
}
.arrow-down {
    border-bottom: 0;
    border-top-color: #50b893;
}
```
